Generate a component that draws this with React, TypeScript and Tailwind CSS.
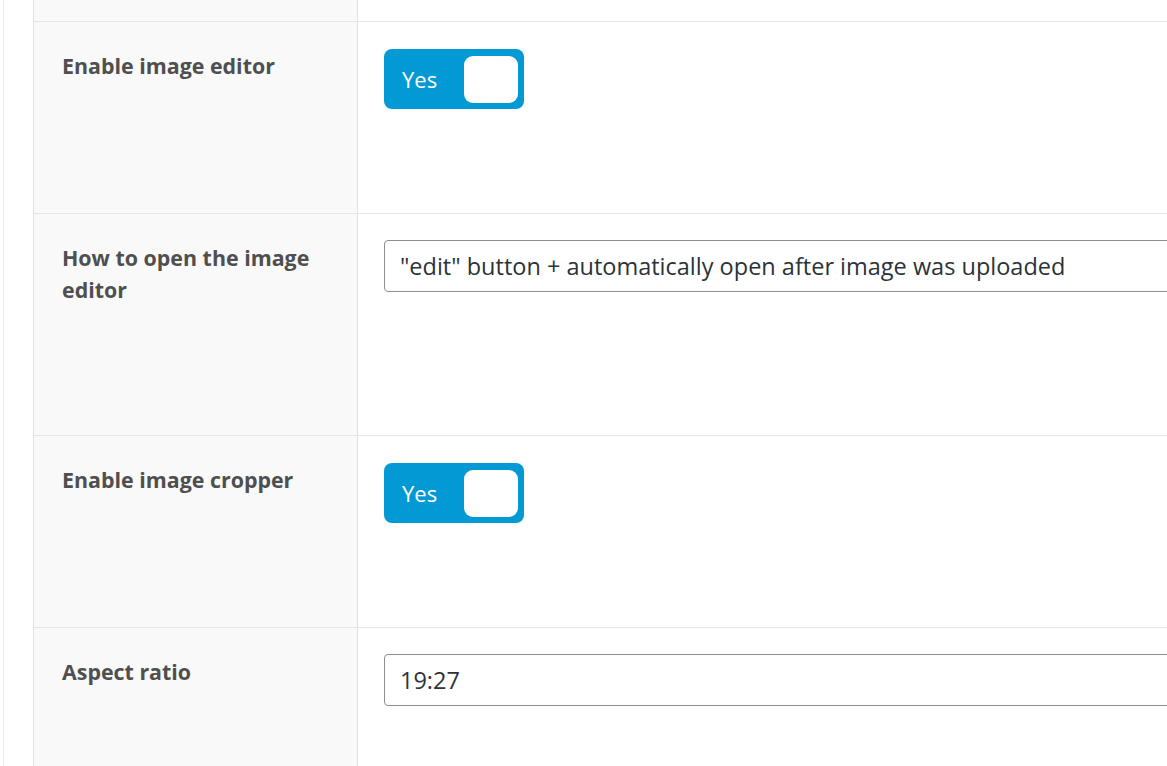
import React from "react";

function Toggle() {
  return (
    <div className="flex h-[60px] w-[140px] items-center justify-between rounded-[8px] bg-[#0399d4] pl-[18px] pr-[6px]">
      <span className="text-[22px] leading-none text-white">Yes</span>
      <span className="h-[47px] w-[54px] rounded-[9px] bg-white" />
    </div>
  );
}

function TextBox({ value }: { value: string }) {
  return (
    <div className="-mt-[1px] flex h-[52px] w-[900px] shrink-0 items-center rounded-[4px] border border-[#8c8f94] bg-white px-[15px] pt-[2px] text-[23.5px] text-[#2c3338]">
      {value}
    </div>
  );
}

function Row({ label, h, children }: { label: string; h: string; children: React.ReactNode }) {
  return (
    <div className={`flex border-b border-[#e6e6e6] ${h}`}>
      <div className="w-[324px] shrink-0 border-r border-[#e1e1e1] bg-[#f9f9f9] pl-[28px] pr-[20px] pt-[28px] text-[21.4px] font-bold leading-[32px] text-[#4f4f4f]">
        {label}
      </div>
      <div className="flex-1 overflow-hidden bg-white pl-[26px] pt-[27px]">{children}</div>
    </div>
  );
}

export default function App() {
  return (
    <div
      className="flex h-[766px] w-[1167px] overflow-hidden bg-white"
      style={{ fontFamily: '"Open Sans", "Noto Sans", sans-serif' }}
    >
      <div className="w-[3px] shrink-0 bg-white" />
      <div className="w-[1px] shrink-0 bg-[#ececec]" />
      <div className="w-[29px] shrink-0 bg-white" />
      <div className="flex-1 border-l border-[#e5e5e5]">
        <div className="flex h-[22px] border-b border-[#e6e6e6]">
          <div className="w-[324px] shrink-0 border-r border-[#e1e1e1] bg-[#f9f9f9]" />
          <div className="flex-1 bg-white" />
        </div>
        <Row label="Enable image editor" h="h-[192px]">
          <Toggle />
        </Row>
        <Row label="How to open the image editor" h="h-[222px]">
          <TextBox value={'"edit" button + automatically open after image was uploaded'} />
        </Row>
        <Row label="Enable image cropper" h="h-[192px]">
          <Toggle />
        </Row>
        <Row label="Aspect ratio" h="h-[200px]">
          <TextBox value="19:27" />
        </Row>
      </div>
    </div>
  );
}
